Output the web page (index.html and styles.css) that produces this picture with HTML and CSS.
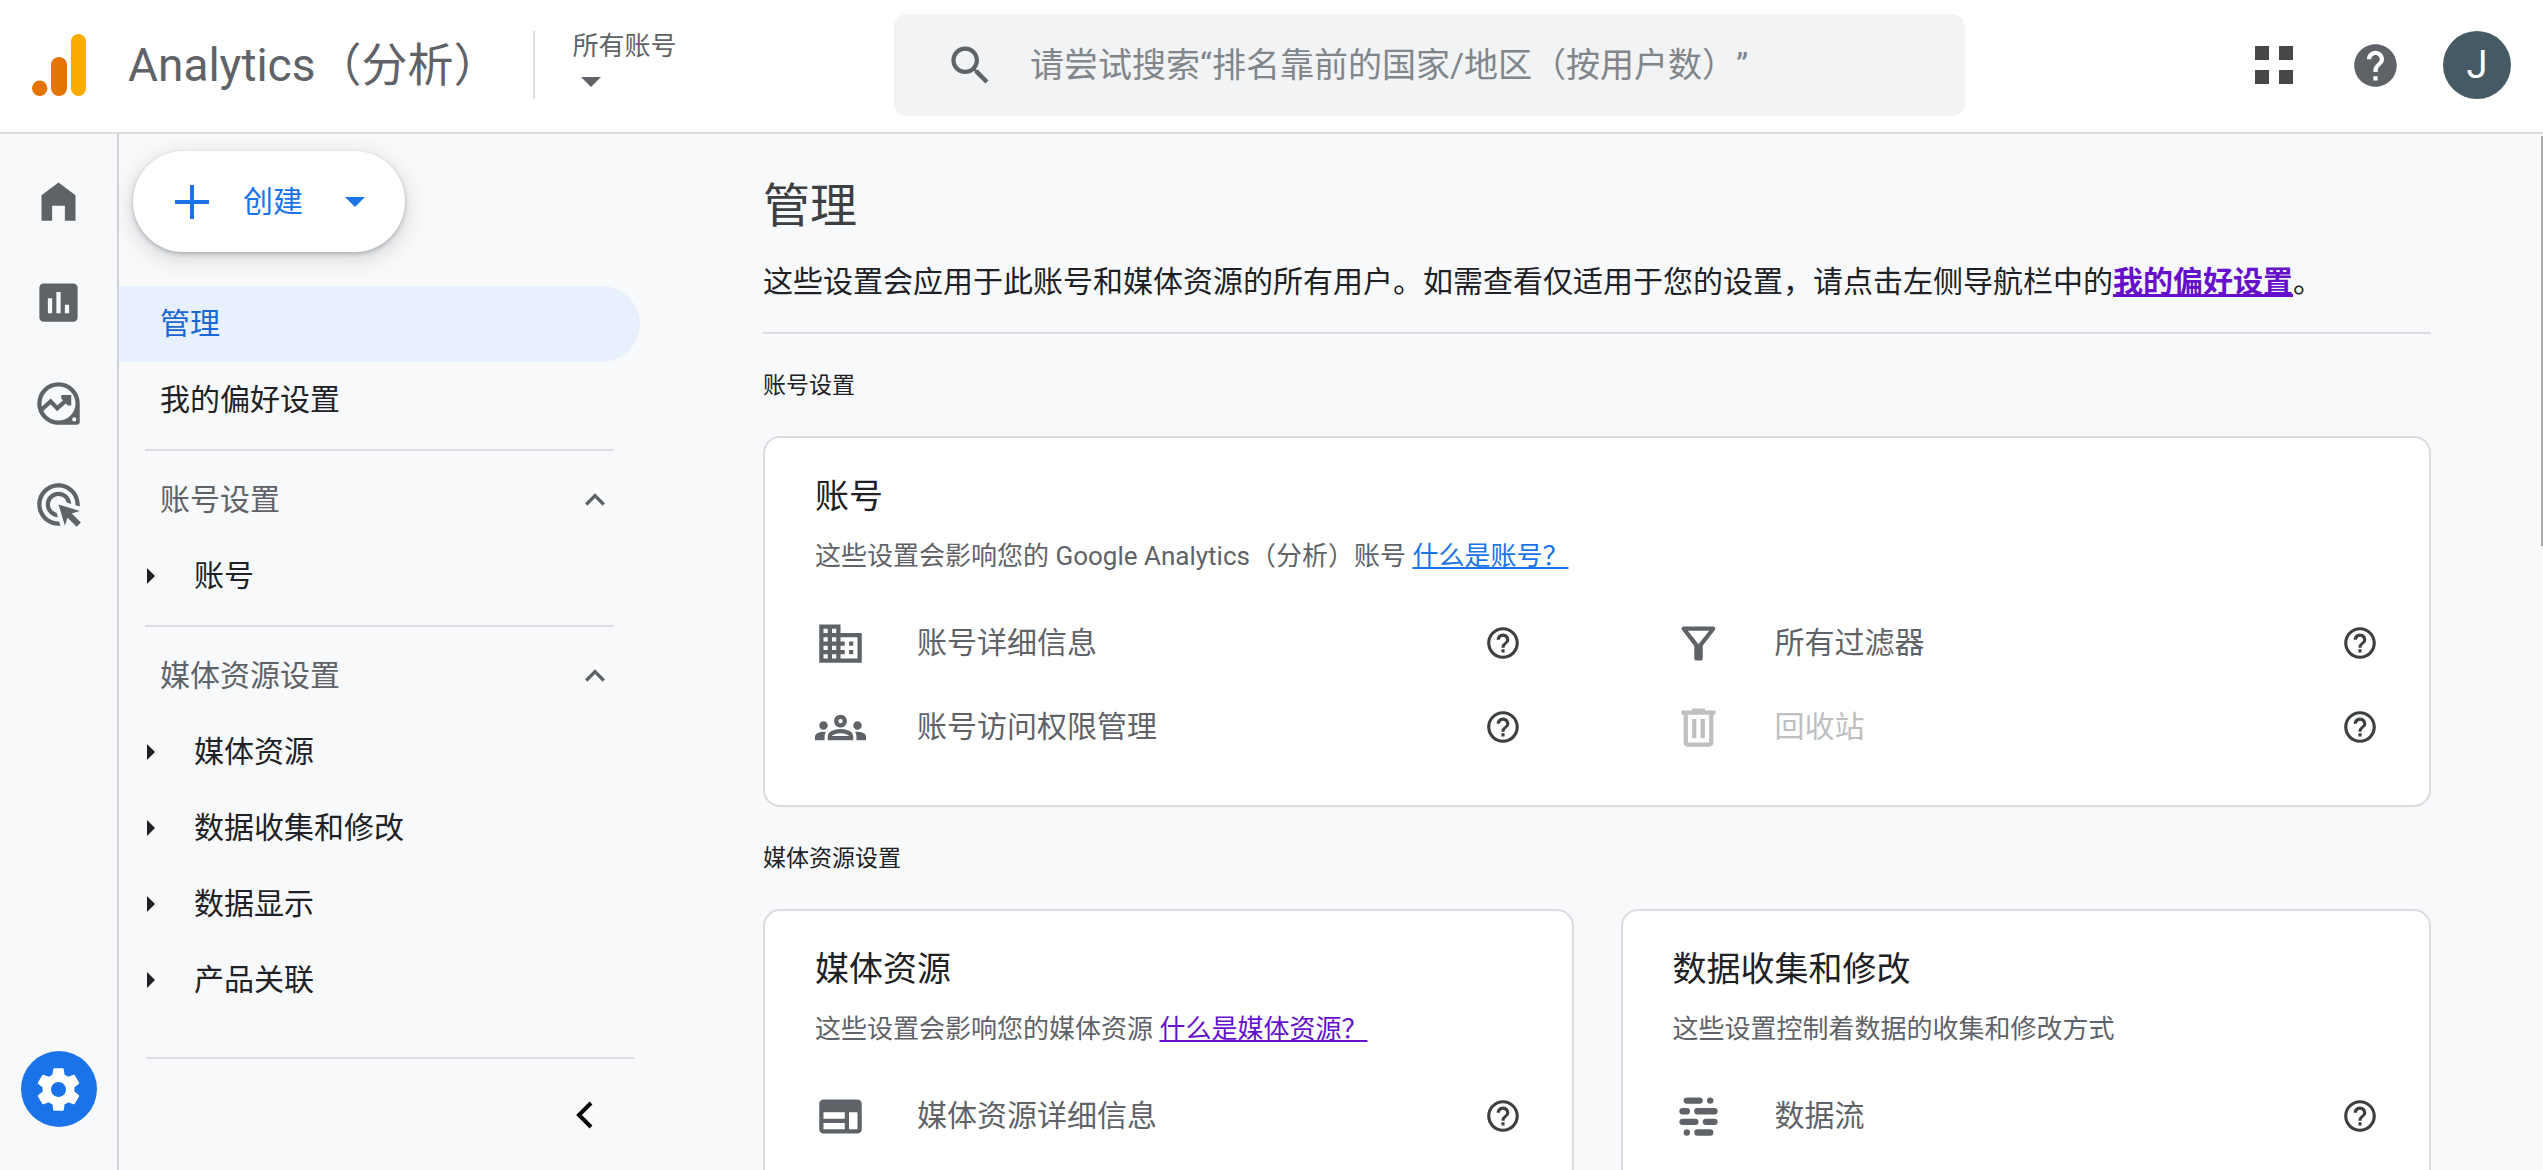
FILE: index.html
```html
<!DOCTYPE html>
<html lang="zh-CN">
<head>
<meta charset="utf-8">
<meta name="viewport" content="width=device-width, initial-scale=1">
<title>Analytics（分析）</title>
<link rel="stylesheet" href="styles.css">
</head>
<body>
<svg class="sprite" aria-hidden="true">
  <symbol id="help-outline" viewBox="0 0 24 24"><path d="M11 18h2v-2h-2v2zm1-16C6.480 2 2 6.480 2 12s4.480 10 10 10 10-4.480 10-10S17.520 2 12 2zm0 18c-4.410 0-8-3.590-8-8s3.590-8 8-8 8 3.590 8 8-3.590 8-8 8zm0-14c-2.210 0-4 1.790-4 4h2c0-1.100.900-2 2-2s2 .900 2 2c0 2-3 1.750-3 5h2c0-2.250 3-2.500 3-5 0-2.210-1.790-4-4-4z"/></symbol>
  <symbol id="chevron-up" viewBox="0 0 24 24"><path d="M12 8l-6 6 1.410 1.410L12 10.830l4.590 4.580L18 14z"/></symbol>
  <symbol id="triangle-down" viewBox="0 0 20 10"><path d="M0 0h20L10 10z"/></symbol>
  <symbol id="triangle-right" viewBox="0 0 8 16"><path d="M0 0l8 8-8 8z"/></symbol>
</svg>
<div class="app">
  <header class="topbar">
    <a class="brand" href="#">
      <svg class="logo" viewBox="0 0 54 62" aria-hidden="true">
        <rect x="39" y="0" width="15" height="62" rx="7.500" fill="#f9ab00"/>
        <rect x="19" y="23" width="16" height="39" rx="8" fill="#e37400"/>
        <circle cx="7.700" cy="54.300" r="7.700" fill="#e37400"/>
      </svg>
      <span class="brand-name">Analytics（分析）</span>
    </a>
    <button class="account-picker" type="button">
      <span>所有账号</span>
      <svg class="caret" aria-hidden="true"><use href="#triangle-down"/></svg>
    </button>
    <label class="search">
      <svg class="icon" viewBox="0 0 24 24" aria-hidden="true"><path d="M15.500 14h-.790l-.280-.270C15.410 12.590 16 11.110 16 9.500 16 5.910 13.090 3 9.500 3S3 5.910 3 9.500 5.910 16 9.500 16c1.610 0 3.090-.590 4.230-1.570l.270.280v.790l5 4.990L20.490 19l-4.990-5zm-6 0C7.010 14 5 11.990 5 9.500S7.010 5 9.500 5 14 7.010 14 9.500 11.990 14 9.500 14z"/></svg>
      <input type="text" aria-label="搜索" placeholder="请尝试搜索“排名靠前的国家/地区（按用户数）”">
    </label>
    <div class="top-actions">
      <button type="button" class="icon-button" aria-label="应用">
        <svg class="apps" viewBox="0 0 38 38" aria-hidden="true"><path d="M0 0h14v14H0zM24 0h14v14H24zM0 24h14v14H0zM24 24h14v14H24z"/></svg>
      </button>
      <button type="button" class="icon-button" aria-label="帮助">
        <svg class="icon" viewBox="0 0 24 24" aria-hidden="true"><path d="M12 2C6.480 2 2 6.480 2 12s4.480 10 10 10 10-4.480 10-10S17.520 2 12 2zm1 17h-2v-2h2v2zm2.070-7.750l-.900.920C13.450 12.900 13 13.500 13 15h-2v-.500c0-1.100.450-2.100 1.170-2.830l1.240-1.260c.370-.360.590-.860.590-1.410 0-1.100-.900-2-2-2s-2 .900-2 2H8c0-2.210 1.790-4 4-4s4 1.790 4 4c0 .880-.360 1.680-.930 2.250z"/></svg>
      </button>
      <button type="button" class="avatar" aria-label="账号 J">J</button>
    </div>
  </header>

  <div class="workspace">
    <nav class="rail" aria-label="主导航">
      <a href="#" aria-label="首页"><svg class="icon" viewBox="0 0 24 24"><path d="M4 21V9l8-6 8 6v12h-5v-7H9v7z"/></svg></a>
      <a href="#" aria-label="报告"><svg class="icon" viewBox="0 0 24 24"><path d="M19 3H5c-1.100 0-2 .900-2 2v14c0 1.100.900 2 2 2h14c1.100 0 2-.900 2-2V5c0-1.100-.900-2-2-2zM9 17H7v-7h2v7zm4 0h-2V7h2v10zm4 0h-2v-4h2v4z"/></svg></a>
      <a href="#" aria-label="探索"><svg class="icon" viewBox="0 0 24 24"><path fill-rule="evenodd" d="M12 2a10 10 0 0 0 0 20h8.500a1.500 1.500 0 0 0 1.500-1.500V12A10 10 0 0 0 12 2zm0 2a8 8 0 1 1 0 16 8 8 0 0 1 0-16zm7.400 14.500a1 1 0 1 1 0 2 1 1 0 0 1 0-2z"/><path d="M3.700 15.200l4.600-4.200 3.100 3.300 5.200-4.700" fill="none" stroke="currentColor" stroke-width="2"/><path d="M13.300 8H18v4.900h-1.600l-3.100-3.300z"/></svg></a>
      <a href="#" aria-label="广告"><svg class="icon" viewBox="0 0 24 24"><path d="M11.710 17.990C8.530 17.840 6 15.220 6 12c0-3.310 2.690-6 6-6 3.220 0 5.840 2.530 5.990 5.710l-2.100-.630C15.480 9.310 13.890 8 12 8c-2.210 0-4 1.790-4 4 0 1.890 1.310 3.480 3.080 3.890l.630 2.100zM22 12c0 .300-.010.600-.040.900l-1.970-.590C20 12.210 20 12.100 20 12c0-4.420-3.580-8-8-8s-8 3.580-8 8 3.580 8 8 8c.100 0 .210 0 .310-.010l.590 1.970C12.600 21.990 12.300 22 12 22 6.480 22 2 17.520 2 12S6.480 2 12 2s10 4.480 10 10zm-3.770 4.260L22 15l-10-3 3 10 1.260-3.770 4.270 4.270 1.980-1.980-4.280-4.260z"/></svg></a>
      <a class="rail-admin" href="#" aria-label="管理"><svg class="icon" viewBox="0 0 24 24"><path d="M19.430 12.980c.040-.320.070-.640.070-.980s-.030-.660-.070-.980l2.110-1.650c.190-.150.240-.420.120-.640l-2-3.460c-.120-.220-.390-.300-.610-.220l-2.490 1c-.520-.400-1.080-.730-1.690-.980l-.380-2.650C14.460 2.180 14.250 2 14 2h-4c-.250 0-.460.180-.490.420l-.380 2.650c-.610.250-1.170.590-1.690.980l-2.490-1c-.230-.090-.490 0-.610.220l-2 3.460c-.130.220-.070.490.120.640l2.110 1.650c-.040.320-.070.650-.070.980s.030.660.070.980l-2.110 1.650c-.190.150-.240.420-.120.640l2 3.460c.120.220.390.300.610.220l2.490-1c.520.400 1.080.730 1.690.980l.380 2.650c.030.240.240.420.490.420h4c.250 0 .460-.180.490-.420l.380-2.650c.610-.250 1.170-.590 1.690-.980l2.490 1c.230.090.490 0 .610-.220l2-3.460c.120-.220.070-.490-.120-.640l-2.110-1.650zM12 15.500c-1.930 0-3.500-1.570-3.500-3.500s1.570-3.500 3.500-3.500 3.500 1.570 3.500 3.500-1.570 3.500-3.500 3.500z"/></svg></a>
    </nav>

    <aside class="sidebar">
      <button class="create" type="button">
        <svg class="plus" viewBox="0 0 34 34" aria-hidden="true"><path d="M15 0h4v15h15v4H19v15h-4V19H0v-4h15z"/></svg>
        <span>创建</span>
        <svg class="caret" aria-hidden="true"><use href="#triangle-down"/></svg>
      </button>
      <nav class="menu" aria-label="管理">
        <a class="menu-link active" href="#" aria-current="page">管理</a>
        <a class="menu-link" href="#">我的偏好设置</a>
        <hr>
        <button class="menu-group" type="button" aria-expanded="true">账号设置<svg aria-hidden="true"><use href="#chevron-up"/></svg></button>
        <a class="menu-child" href="#"><svg aria-hidden="true"><use href="#triangle-right"/></svg>账号</a>
        <hr>
        <button class="menu-group" type="button" aria-expanded="true">媒体资源设置<svg aria-hidden="true"><use href="#chevron-up"/></svg></button>
        <a class="menu-child" href="#"><svg aria-hidden="true"><use href="#triangle-right"/></svg>媒体资源</a>
        <a class="menu-child" href="#"><svg aria-hidden="true"><use href="#triangle-right"/></svg>数据收集和修改</a>
        <a class="menu-child" href="#"><svg aria-hidden="true"><use href="#triangle-right"/></svg>数据显示</a>
        <a class="menu-child" href="#"><svg aria-hidden="true"><use href="#triangle-right"/></svg>产品关联</a>
      </nav>
      <div class="sidebar-footer">
        <button type="button" class="icon-button" aria-label="收起">
          <svg class="collapse" viewBox="0 0 17 28" aria-hidden="true"><path d="M15 2L3 14l12 12" fill="none" stroke="#000" stroke-width="4"/></svg>
        </button>
      </div>
    </aside>

    <main class="content">
      <h1>管理</h1>
      <p class="intro">这些设置会应用于此账号和媒体资源的所有用户。如需查看仅适用于您的设置，请点击左侧导航栏中的<a href="#">我的偏好设置</a>。</p>
      <hr>
      <h2>账号设置</h2>
      <section class="card">
        <h3>账号</h3>
        <p>这些设置会影响您的 Google Analytics（分析）账号 <a href="#">什么是账号？</a></p>
        <ul class="settings two-columns">
          <li>
            <a href="#"><svg class="icon" viewBox="0 0 24 24" aria-hidden="true"><path d="M12 7V3H2v18h20V7H12zM6 19H4v-2h2v2zm0-4H4v-2h2v2zm0-4H4V9h2v2zm0-4H4V5h2v2zm4 12H8v-2h2v2zm0-4H8v-2h2v2zm0-4H8V9h2v2zm0-4H8V5h2v2zm10 12h-8v-2h2v-2h-2v-2h2v-2h-2V9h8v10zm-2-8h-2v2h2v-2zm0 4h-2v2h2v-2z"/></svg>账号详细信息</a>
            <button class="help" type="button" aria-label="帮助"><svg><use href="#help-outline"/></svg></button>
          </li>
          <li>
            <a href="#"><svg class="icon" viewBox="0 0 24 24" aria-hidden="true"><path d="M7 6h10l-5.010 6.300L7 6zm-2.750-.390C6.270 8.200 10 13 10 13v6c0 .550.450 1 1 1h2c.550 0 1-.450 1-1v-6s3.720-4.800 5.740-7.390C20.250 4.950 19.780 4 18.950 4H5.040c-.830 0-1.300.950-.790 1.610z"/></svg>所有过滤器</a>
            <button class="help" type="button" aria-label="帮助"><svg><use href="#help-outline"/></svg></button>
          </li>
          <li>
            <a href="#"><svg class="icon" viewBox="0 0 24 24" aria-hidden="true"><path d="M4 13c1.100 0 2-.900 2-2s-.900-2-2-2-2 .900-2 2 .900 2 2 2zm1.130 1.100C4.760 14.040 4.390 14 4 14c-.990 0-1.930.210-2.780.580C.480 14.900 0 15.620 0 16.430V18h4.500v-1.610c0-.830.230-1.610.630-2.290zM20 13c1.100 0 2-.900 2-2s-.900-2-2-2-2 .900-2 2 .900 2 2 2zm4 3.430c0-.810-.480-1.530-1.220-1.850C21.930 14.210 20.990 14 20 14c-.390 0-.760.040-1.130.100.400.680.630 1.460.630 2.290V18H24v-1.570zm-7.760-2.780c-1.170-.520-2.610-.900-4.240-.900s-3.070.390-4.240.900C6.680 14.130 6 15.210 6 16.390V18h12v-1.610c0-1.180-.680-2.260-1.760-2.740zM8.070 16c.090-.230.130-.390.910-.690.970-.380 1.990-.560 3.020-.560s2.050.180 3.020.560c.770.300.810.460.910.690H8.070zM12 8c.550 0 1 .450 1 1s-.450 1-1 1-1-.450-1-1 .450-1 1-1m0-2c-1.660 0-3 1.340-3 3s1.340 3 3 3 3-1.340 3-3-1.340-3-3-3z"/></svg>账号访问权限管理</a>
            <button class="help" type="button" aria-label="帮助"><svg><use href="#help-outline"/></svg></button>
          </li>
          <li>
            <a class="disabled" href="#" aria-disabled="true"><svg class="icon" viewBox="0 0 24 24" aria-hidden="true"><path fill-rule="evenodd" d="M15 4V3H9v1H4v2h1v13c0 1.100.900 2 2 2h10c1.100 0 2-.900 2-2V6h1V4zM7 6h10v13H7zM9 8h2v9H9zM13 8h2v9h-2z"/></svg>回收站</a>
            <button class="help" type="button" aria-label="帮助"><svg><use href="#help-outline"/></svg></button>
          </li>
        </ul>
      </section>
      <h2>媒体资源设置</h2>
      <div class="card-grid">
        <section class="card">
          <h3>媒体资源</h3>
          <p>这些设置会影响您的媒体资源 <a class="visited" href="#">什么是媒体资源？</a></p>
          <ul class="settings">
            <li>
              <a href="#"><svg class="icon" viewBox="0 0 24 24" aria-hidden="true"><path d="M20 4H4c-1.100 0-2 .900-2 2v12c0 1.100.900 2 2 2h16c1.100 0 2-.900 2-2V6c0-1.100-.900-2-2-2zm-6 14H4v-3h10v3zm0-5H4v-3h10v3zm6 5h-4v-8h4v8z"/></svg>媒体资源详细信息</a>
              <button class="help" type="button" aria-label="帮助"><svg><use href="#help-outline"/></svg></button>
            </li>
          </ul>
        </section>
        <section class="card">
          <h3>数据收集和修改</h3>
          <p>这些设置控制着数据的收集和修改方式</p>
          <ul class="settings">
            <li>
              <a href="#"><svg class="icon" viewBox="0 0 24 24" aria-hidden="true"><g><rect x="5" y="3" width="9" height="3" rx="1.500"/><rect x="16" y="3" width="3" height="3" rx="1.500"/><rect x="3" y="8" width="5" height="3" rx="1.500"/><rect x="10" y="8" width="11" height="3" rx="1.500"/><rect x="3" y="13" width="9" height="3" rx="1.500"/><rect x="14" y="13" width="7" height="3" rx="1.500"/><rect x="5" y="18" width="3" height="3" rx="1.500"/><rect x="10" y="18" width="9" height="3" rx="1.500"/></g></svg>数据流</a>
              <button class="help" type="button" aria-label="帮助"><svg><use href="#help-outline"/></svg></button>
            </li>
          </ul>
        </section>
      </div>
    </main>
    <div class="scroll-thumb"></div>
  </div>
</div>
</body>
</html>
```
FILE: styles.css
```css
* {
  box-sizing: border-box;
}

body {
  margin: 0;
  background: #f8f9fb;
  color: #202124;
  font-family: Roboto, "Noto Sans CJK SC", sans-serif;
  font-size: 30px;
  line-height: 44px;
  text-spacing-trim: space-all;
}

h1, h2, h3, p, ul {
  margin: 0;
  padding: 0;
  font-weight: 400;
}

a {
  color: inherit;
  text-decoration: none;
}

button {
  border: 0;
  padding: 0;
  background: none;
  color: inherit;
  font: inherit;
  cursor: pointer;
}

hr {
  height: 2px;
  margin: 0;
  border: 0;
  background: #dadce0;
}

svg {
  display: block;
  flex: none;
  fill: currentColor;
}

.sprite {
  display: none;
}

.icon {
  width: 51px;
  height: 51px;
}

.caret {
  width: 20px;
  height: 10px;
}

.app {
  display: flex;
  flex-direction: column;
  height: 100vh;
}

/* Top bar */

.topbar {
  display: flex;
  align-items: center;
  height: 134px;
  padding: 0 32px 2px;
  border-bottom: 2px solid #dadce0;
  background: #fff;
  color: #5f6368;
}

.brand {
  display: flex;
  align-items: center;
  gap: 42px;
}

.logo {
  width: 54px;
  height: 62px;
}

.brand-name {
  font-size: 46px;
  line-height: 64px;
  white-space: nowrap;
}

.account-picker {
  display: flex;
  flex-direction: column;
  align-items: flex-start;
  gap: 16px;
  height: 68px;
  margin-left: 34px;
  padding-left: 37px;
  border-left: 2px solid #dadce0;
  font-size: 26px;
  line-height: 30px;
  white-space: nowrap;
}

.account-picker .caret {
  margin-left: 9px;
}

.search {
  display: flex;
  align-items: center;
  gap: 34px;
  width: 1071px;
  height: 102px;
  margin-left: auto;
  padding: 0 51px;
  border-radius: 13px;
  background: #f1f3f4;
}

.search input {
  flex: 1;
  min-width: 0;
  padding: 0;
  border: 0;
  outline: 0;
  background: none;
  color: #202124;
  font: inherit;
  font-size: 34px;
  line-height: 48px;
  text-spacing-trim: space-all;
}

.search input::placeholder {
  color: #80868b;
  opacity: 1;
}

.top-actions {
  display: flex;
  align-items: center;
  gap: 57px;
  margin-left: 290px;
}

.apps {
  width: 38px;
  height: 38px;
  color: #474747;
}

.avatar {
  width: 68px;
  height: 68px;
  margin-left: -15px;
  border-radius: 50%;
  background: #455a64;
  color: #fff;
  font-size: 38px;
}

/* Body columns */

.workspace {
  position: relative;
  display: flex;
  flex: 1;
  min-height: 0;
}

.rail {
  display: flex;
  flex-direction: column;
  align-items: center;
  width: 119px;
  padding: 17px 0 43px;
  border-right: 2px solid #d2d3d6;
  color: #5f6368;
}

.rail a {
  display: flex;
  align-items: center;
  justify-content: center;
  width: 76px;
  height: 101px;
}

.rail .rail-admin {
  height: 76px;
  margin-top: auto;
  border-radius: 50%;
  background: #1a73e8;
  color: #fff;
}

/* Sidebar */

.sidebar {
  display: flex;
  flex-direction: column;
  width: 521px;
  padding-top: 17px;
}

.create {
  display: flex;
  align-items: center;
  align-self: flex-start;
  gap: 34px;
  height: 101px;
  margin: 0 14px 34px;
  padding: 0 40px 0 42px;
  border-radius: 51px;
  background: #fff;
  box-shadow: 0 2px 4px rgba(60, 64, 67, .3), 0 6px 18px 4px rgba(60, 64, 67, .15);
  color: #1a73e8;
}

.create .caret {
  margin-left: 8px;
}

.plus {
  width: 34px;
  height: 34px;
}

.menu {
  display: flex;
  flex-direction: column;
}

.menu hr {
  margin: 11px 26px;
}

.menu-link,
.menu-group,
.menu-child {
  display: flex;
  align-items: center;
  height: 76px;
}

.menu-link {
  padding-left: 41px;
}

.menu-link.active {
  border-radius: 0 38px 38px 0;
  background: #e8f0fe;
  color: #1967d2;
}

.menu-group {
  justify-content: space-between;
  padding: 0 25px 0 41px;
  color: #5f6368;
}

.menu-group svg {
  width: 40px;
  height: 40px;
}

.menu-child {
  gap: 39px;
  padding-left: 28px;
}

.menu-child svg {
  width: 8px;
  height: 16px;
}

.sidebar-footer {
  display: flex;
  align-items: center;
  justify-content: flex-end;
  height: 113px;
  margin: auto 6px 0 27px;
  padding-right: 41px;
  border-top: 2px solid #dadce0;
}

.collapse {
  width: 17px;
  height: 28px;
}

/* Main content */

.content {
  flex: 1;
  min-width: 0;
  padding: 40px 112px 48px 123px;
  overflow-y: auto;
  scrollbar-width: none;
}

.content h1 {
  color: #3c4043;
  font-size: 47px;
  line-height: 64px;
}

.intro {
  margin: 22px 0 28px;
}

.content p a {
  color: #1a73e8;
  text-decoration: underline 2px;
  text-underline-offset: 2px;
}

.content .intro a {
  color: #6610cc;
  font-weight: 700;
  text-decoration-thickness: 3px;
}

.content p .visited {
  color: #6610cc;
}

.content h2 {
  margin: 35px 0 33px;
  font-size: 23px;
  line-height: 34px;
}

.card {
  padding: 34px 50px 36px;
  border: 2px solid #dadce0;
  border-radius: 17px;
  background: #fff;
}

.card h3 {
  font-size: 34px;
  line-height: 48px;
}

.card p {
  margin: 19px 0 28px;
  color: #5f6368;
  font-size: 26px;
  line-height: 34px;
}

.card-grid {
  display: grid;
  grid-template-columns: 1fr 1fr;
  gap: 47px;
}

.settings {
  display: grid;
  list-style: none;
}

.two-columns {
  grid-template-columns: 1fr 1fr;
  column-gap: 151px;
}

.settings li {
  display: flex;
  align-items: center;
  justify-content: space-between;
  height: 84px;
  color: #3c4043;
}

.settings a {
  display: flex;
  align-items: center;
  gap: 51px;
  color: #5f6368;
}

.settings .disabled {
  color: #bdbfc1;
}

.help svg {
  width: 38px;
  height: 38px;
}

.scroll-thumb {
  position: absolute;
  top: 2px;
  right: 0;
  width: 2px;
  height: 410px;
  background: #a8a9ab;
}
```
